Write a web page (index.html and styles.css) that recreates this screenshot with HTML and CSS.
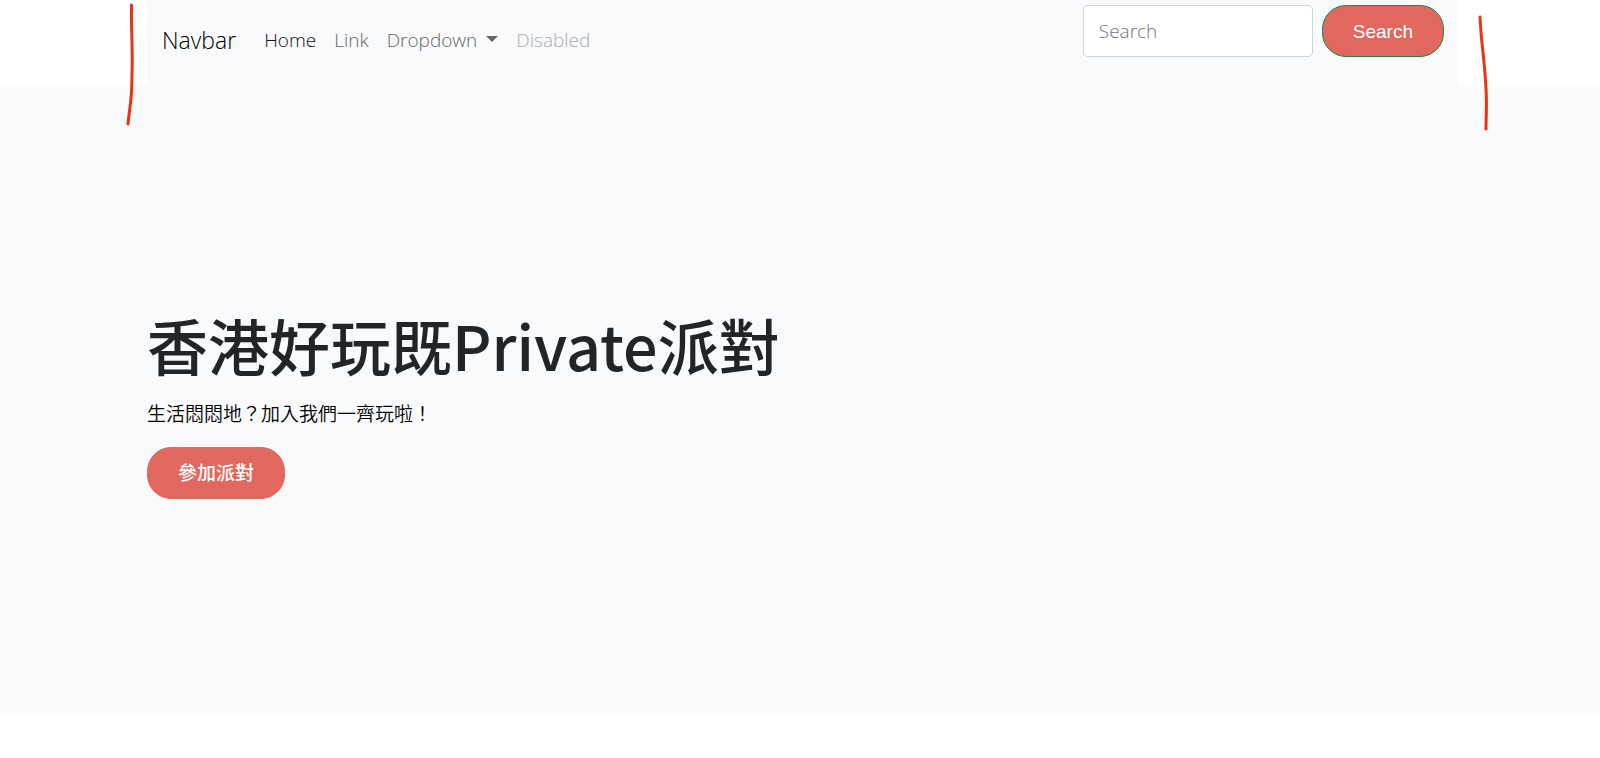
FILE: index.html
```
<!DOCTYPE html>
<html lang="zh-Hant-HK">
<head>
<meta charset="utf-8">
<meta name="viewport" content="width=device-width, initial-scale=1">
<title>香港好玩既Private派對</title>
<link rel="stylesheet" href="styles.css">
</head>
<body>
<header class="page-header">
  <nav class="navbar">
    <a class="brand" href="#">Navbar</a>
    <ul class="nav-list">
      <li><a class="nav-link active" href="#">Home</a></li>
      <li><a class="nav-link" href="#">Link</a></li>
      <li><a class="nav-link dropdown" href="#">Dropdown</a></li>
      <li><a class="nav-link disabled" href="#" aria-disabled="true">Disabled</a></li>
    </ul>
    <form class="search-form">
      <input class="search-input" type="search" placeholder="Search" aria-label="Search">
      <button class="btn btn-outlined" type="button">Search</button>
    </form>
  </nav>
</header>
<main class="hero">
  <h1 class="hero-title">香港好玩既Private派對</h1>
  <p class="hero-text">生活悶悶地？加入我們一齊玩啦！</p>
  <button class="btn" type="button">參加派對</button>
</main>
<svg class="mark mark-left" width="12" height="126" viewBox="0 0 12 126" aria-hidden="true"><path d="M5.500 3C5 28 7 48 6 72C6 102 4 100 2 122"/></svg>
<svg class="mark mark-right" width="12" height="118" viewBox="0 0 12 118" aria-hidden="true"><path d="M2 3C3 28 7 49 8 75C9 92 8 101 8 115"/></svg>
</body>
</html>
```
FILE: styles.css
```
*, *::before, *::after { box-sizing: border-box; }

body {
  margin: 0;
  background: #fff;
  color: #212529;
  font-family: "Open Sans", "Noto Sans CJK TC", sans-serif;
  font-size: 19px;
  font-weight: 300;
  line-height: 28px;
}

.page-header { padding: 0 142px 0 147px; }

.navbar {
  display: flex;
  align-items: flex-start;
  min-height: 85px;
  padding: 5px 14px 5px 15px;
  background: #f8fafc;
}

.brand {
  margin: 17px 28px 0 0;
  color: #000;
  font-size: 23px;
  line-height: 36px;
  text-decoration: none;
}

.nav-list {
  display: flex;
  gap: 18px;
  margin: 21px auto 0 0;
  padding: 0;
  list-style: none;
}

.nav-link { color: #666; text-decoration: none; }
.nav-link.active { color: #111; }
.nav-link.disabled { color: #aaabad; }

.dropdown::after {
  content: "";
  display: inline-block;
  margin-left: 9px;
  vertical-align: 5px;
  border-top: 6px solid #666;
  border-right: 6px solid transparent;
  border-left: 6px solid transparent;
}

.search-form { display: flex; gap: 9px; }

.search-input {
  width: 230px;
  height: 52px;
  padding: 0 15px;
  border: 1px solid #ced4da;
  border-radius: 5px;
  background: #fff;
  color: #212529;
  font: inherit;
}
.search-input::placeholder { color: #6c757d; opacity: 1; }

.btn {
  height: 52px;
  padding: 2px 30px 0;
  border: 1px solid #e0685f;
  border-radius: 24px;
  background: #e0685f;
  color: #fff;
  font-family: "Liberation Sans", "Noto Sans CJK TC", sans-serif;
  font-size: 19px;
  font-weight: 500;
  line-height: 28px;
}
.btn-outlined { border-color: #198754; }

.hero {
  min-height: 628px;
  padding: 218px 142px 0 147px;
  background: #f8fafc;
}

.hero-title {
  margin: 0 0 12px;
  font-family: "Noto Sans CJK TC", sans-serif;
  font-size: 61px;
  font-weight: 500;
  line-height: 84px;
}

.hero-text {
  margin: 0 0 20px;
  color: #000;
  font-family: "Noto Sans CJK TC", sans-serif;
  font-weight: 350;
}

/* Hand-drawn pen strokes over the page */
.mark {
  position: absolute;
  fill: none;
  stroke: #ed3210;
  stroke-width: 3;
  stroke-linecap: round;
}
.mark-left { top: 2px; left: 126px; }
.mark-right { top: 14px; right: 110px; }
```
